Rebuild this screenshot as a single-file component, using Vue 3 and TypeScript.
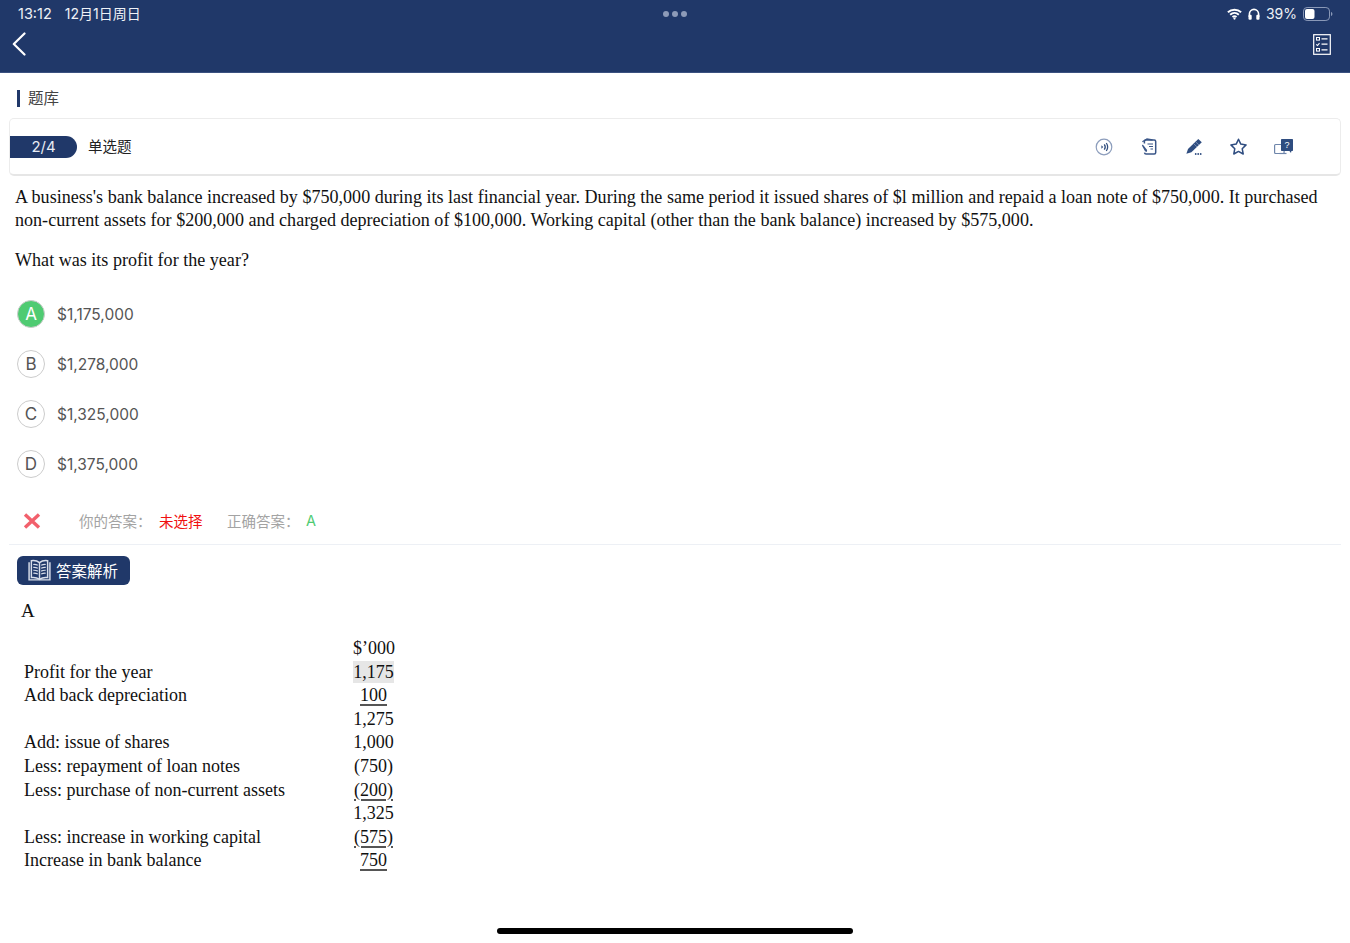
<script setup lang="ts">
interface Opt { key: string; text: string; correct?: boolean }
const options: Opt[] = [
  { key: 'A', text: '$1,175,000', correct: true },
  { key: 'B', text: '$1,278,000' },
  { key: 'C', text: '$1,325,000' },
  { key: 'D', text: '$1,375,000' },
]
interface Row { label: string; value: string; under?: boolean; mark?: boolean }
const rows: Row[] = [
  { label: '', value: '$’000' },
  { label: 'Profit for the year', value: '1,175', mark: true },
  { label: 'Add back depreciation', value: '100', under: true },
  { label: '', value: '1,275' },
  { label: 'Add: issue of shares', value: '1,000' },
  { label: 'Less: repayment of loan notes', value: '(750)' },
  { label: 'Less: purchase of non-current assets', value: '(200)', under: true },
  { label: '', value: '1,325' },
  { label: 'Less: increase in working capital', value: '(575)', under: true },
  { label: 'Increase in bank balance', value: '750', under: true },
]
</script>

<template>
  <div class="page">
    <header class="top">
      <div class="status">
        <div class="status-left"><span class="time">13:12</span><span>12月1日周日</span></div>
        <div class="dots"><i></i><i></i><i></i></div>
        <div class="status-right">
          <svg width="15" height="12" viewBox="0 0 17 13" fill="none" stroke="#fff" stroke-width="2.200">
            <path d="M1 4.600C5.300.6 11.700.6 16 4.600" />
            <path d="M3.600 7.400c2.900-2.600 6.900-2.600 9.800 0" />
            <path d="M6.200 10c1.400-1.100 3.200-1.100 4.600 0" />
            <circle cx="8.500" cy="11.700" r="1.300" fill="#fff" stroke="none" />
          </svg>
          <svg class="phones" width="12" height="12" viewBox="0 0 12 12" fill="none">
            <path d="M1.400 9V6a4.600 4.600 0 0 1 9.200 0v3" stroke="#fff" stroke-width="1.600" />
            <rect x="0.500" y="6.800" width="3.200" height="5" rx="1.100" fill="#fff" />
            <rect x="8.300" y="6.800" width="3.200" height="5" rx="1.100" fill="#fff" />
          </svg>
          <span class="pct">39%</span>
          <svg width="30" height="14" viewBox="0 0 30 14" fill="none">
            <rect x="0.500" y="0.500" width="26" height="13" rx="3.600" stroke="#8a99b8" />
            <rect x="2" y="2" width="9.500" height="10" rx="2" fill="#fff" />
            <path d="M28 5v4c.9-.3 1.400-1 1.400-2S28.900 5.300 28 5z" fill="#8a99b8" />
          </svg>
        </div>
      </div>
      <div class="nav">
        <svg width="14" height="24" viewBox="0 0 14 24" fill="none" stroke="#fff" stroke-width="2.200" stroke-linecap="round" stroke-linejoin="round">
          <path d="M12.500 1.500 1.800 12l10.700 10.500" />
        </svg>
        <svg width="18" height="21" viewBox="0 0 18 21" fill="none" stroke="#fff">
          <rect x="0.700" y="0.700" width="16.600" height="19.600" stroke-width="1.200" />
          <rect x="3.500" y="3.500" width="3" height="2.600" stroke-width="1" />
          <path d="M8.500 4.800h6M8.500 10.200h6M8.500 15.800h6" stroke-width="1.200" />
          <path d="m3.300 10.300 1.200 1.200 2-2.300" stroke-width="1.100" />
          <rect x="3.500" y="14.500" width="3" height="2.600" stroke-width="1" />
        </svg>
      </div>
    </header>

    <div class="crumb"><span>题库</span></div>

    <div class="card">
      <div class="card-left">
        <div class="pill">2/4</div>
        <div class="type">单选题</div>
      </div>
      <div class="tools">
        <svg width="18" height="18" viewBox="0 0 18 18" fill="none" stroke="#33507f">
          <circle cx="9" cy="9" r="7.800" stroke="#8c9dbc" stroke-width="1.200" />
          <path d="M6.400 7.200 8.200 9l-1.800 1.800z" fill="#33507f" stroke="none" />
          <path d="M9.300 6.300c1.200 1.700 1.200 3.700 0 5.400" stroke-width="1.300" />
          <path d="M11.300 5c1.700 2.500 1.700 5.500 0 8" stroke-width="1.300" />
        </svg>
        <svg width="16" height="17" viewBox="0 0 16 17" fill="none" stroke="#3a5688" stroke-width="1.500">
          <path d="M3.400 5.500V3.600c0-.9.600-1.500 1.500-1.500h8.300c.9 0 1.500.6 1.500 1.500v10.800c0 .9-.6 1.500-1.500 1.500H5c-.8 0-1.400-.5-1.500-1.200" />
          <path d="M1.400 3.800 6 1l5.600 1" stroke-width="1.300" />
          <path d="M6.500 6h5.500M8 8.500h4M9.500 11h2.500" stroke-width="1.200" />
          <path d="m1.800 6.400 4.300 5.700-.3 2-1.800-.9L.9 7.600z" fill="#3a5688" stroke="none" />
        </svg>
        <svg class="pencil" width="16" height="16" viewBox="0 0 16 16" fill="#2f4d80">
          <path d="M12.300 0 15.800 3.300 5.400 13.200.4 14.800 2 9.900z" />
          <path d="m9.600 2.800 3.400 3.200M7.700 4.700l3.300 3.200" stroke="#8fa3c4" stroke-width=".7" fill="none" />
          <circle cx="9.700" cy="15" r=".9" />
          <circle cx="12.200" cy="15" r=".9" />
          <circle cx="14.700" cy="15" r=".9" />
        </svg>
        <svg width="17" height="17" viewBox="0 0 17 17" fill="none" stroke="#2f4d80" stroke-width="1.500" stroke-linejoin="round">
          <path d="m8.500 1.200 2.300 4.900 5.300.8-3.900 3.800 1 5.300-4.700-2.600L3.800 16l1-5.300L.9 6.900l5.300-.8z" />
        </svg>
        <svg width="20" height="16" viewBox="0 0 20 16" fill="none">
          <rect x="0.600" y="5.500" width="9.500" height="9" rx="1" stroke="#6f86ab" stroke-width="1.200" />
          <path d="M5.500 14.500h7" stroke="#6f86ab" stroke-width="1.200" />
          <path d="M7 .700c0-.4.300-.7.700-.7H18.300c.4 0 .7.300.7.700v10.600c0 .4-.3.700-.7.700h-.9l-.4 2-1.600-2H7.700c-.4 0-.7-.3-.7-.7z" fill="#2f4d80" />
          <text x="13" y="9" class="qmark">?</text>
        </svg>
      </div>
    </div>

    <section class="question">
      <p class="para">A business's bank balance increased by $750,000 during its last financial year. During the same period it issued shares of $l million and repaid a loan note of $750,000. It purchased non-current assets for $200,000 and charged depreciation of $100,000. Working capital (other than the bank balance) increased by $575,000.</p>
      <p class="ask">What was its profit for the year?</p>
    </section>

    <ul class="options">
      <li v-for="o in options" :key="o.key" class="option">
        <span class="badge" :class="{ ok: o.correct }">{{ o.key }}</span>
        <span>{{ o.text }}</span>
      </li>
    </ul>

    <div class="result">
      <svg class="cross" width="18" height="16" viewBox="0 0 18 16" fill="none" stroke="#f2606c" stroke-width="3.400">
        <path d="m2 1.500 14 13M16 1.500l-14 13" />
      </svg>
      <span class="muted first">你的答案：</span>
      <span class="red">未选择</span>
      <span class="muted second">正确答案：</span>
      <span class="green">A</span>
    </div>

    <div class="analysis-head">
      <div class="analysis-tag">
        <svg width="25" height="25" viewBox="0 0 24 24" fill="none" stroke="#d8deea" stroke-width="1">
          <path d="M2 4v17h20V4" stroke-width="1.400" />
          <path d="M12 4.500C9.800 2.700 7 2.200 4.200 2.600V18.800c2.800-.4 5.600.1 7.800 1.700 2.200-1.600 5-2.100 7.800-1.700V2.600C17 2.200 14.200 2.700 12 4.500zM12 4.500v16" stroke-width="1.400" />
          <path d="M6 6.200c1.400-.1 3 .1 4.400.8M6 9c1.400-.1 3 .1 4.400.8M6 11.800c1.400-.1 3 .1 4.400.8M6 14.600c1.400-.1 3 .1 4.400.8M18 6.200c-1.400-.1-3 .1-4.400.8M18 9c-1.400-.1-3 .1-4.400.8M18 11.800c-1.400-.1-3 .1-4.400.8M18 14.600c-1.400-.1-3 .1-4.400.8" stroke-width="1.100" />
        </svg>
        <span>答案解析</span>
      </div>
    </div>

    <div class="answer-letter">A</div>

    <div class="sheet">
      <template v-for="(r, i) in rows" :key="i">
        <div class="sheet-label">{{ r.label }}</div>
        <div class="sheet-value"><span :class="{ under: r.under, mark: r.mark }">{{ r.value }}</span></div>
      </template>
    </div>

    <div class="home"></div>
  </div>
</template>

<style>
html, body { margin: 0; background: #fff; }
</style>

<style scoped>
.page {
  height: 943px;
  display: flex;
  flex-direction: column;
  overflow: hidden;
  background: #fff;
  font-family: Inter, "Noto Sans CJK SC", sans-serif;
}
.top {
  height: 73px;
  flex: none;
  background: #203869;
  color: #fff;
  padding: 5px 18px 0;
  box-sizing: border-box;
  border-bottom: 1px solid #3b5180;
}
.status {
  display: grid;
  grid-template-columns: 1fr auto 1fr;
  align-items: center;
  height: 18px;
  font-size: 14px;
  line-height: 18px;
  color: #eef1f6;
}
.status-left { display: flex; gap: 13px; align-items: baseline; }
.time { font-size: 14.500px; }
.dots { display: flex; gap: 3px; }
.dots i { width: 6px; height: 6px; border-radius: 50%; background: #8d9bb8; }
.status-right { display: flex; justify-content: flex-end; align-items: center; margin-right: -1px; }
.phones { margin-left: 6px; }
.pct { margin: 0 6px; font-size: 14px; }
.nav {
  display: flex;
  justify-content: space-between;
  align-items: center;
  margin: 9px 1px 0 -6px;
  height: 24px;
}
.crumb {
  margin: 17px 0 0 17px;
  padding-left: 8px;
  border-left: 3px solid #203869;
  height: 17px;
  line-height: 17px;
  font-size: 15.500px;
  color: #444;
}
.card {
  margin: 11px 9px 0;
  height: 58px;
  flex: none;
  box-sizing: border-box;
  border: 1px solid #ececec;
  border-bottom: 2px solid #e6e6e6;
  border-radius: 5px;
  display: flex;
  align-items: center;
  justify-content: space-between;
}
.card-left { display: flex; align-items: center; }
.pill {
  width: 67px;
  height: 22px;
  line-height: 22px;
  text-align: center;
  background: #203869;
  color: #e8ecf3;
  font-size: 15px;
  border-radius: 0 11px 11px 0;
}
.type { margin-left: 11px; padding-bottom: 2px; font-size: 14.500px; color: #222; }
.tools {
  display: flex;
  align-items: center;
  justify-content: space-between;
  width: 199px;
  margin-right: 46px;
}
.pencil { margin-left: 2px; }
.qmark { fill: #fff; font-size: 9px; text-anchor: middle; font-family: "Liberation Sans", sans-serif; }
.question {
  margin: 0;
  padding: 10px 15px 0;
  font-family: "Liberation Serif", serif;
  font-size: 18.080px;
  line-height: 23px;
  color: #111;
}
.para { margin: 0; }
.ask { margin: 17px 0 0; }
.options {
  list-style: none;
  margin: 17px 0 0;
  padding: 0 0 0 17px;
}
.option {
  height: 50px;
  display: flex;
  align-items: center;
  gap: 12px;
  font-size: 15.500px;
  color: #555;
}
.badge {
  width: 28px;
  height: 28px;
  box-sizing: border-box;
  border: 1px solid #ccc;
  border-radius: 50%;
  display: flex;
  align-items: center;
  justify-content: center;
  font-size: 17px;
  color: #555;
}
.badge.ok { background: #4fcb72; color: #fff; }
.result {
  margin: 10px 9px 0;
  padding: 0 0 2px 14px;
  height: 46px;
  flex: none;
  box-sizing: border-box;
  border-bottom: 1px solid #edf0f5;
  display: flex;
  align-items: center;
  font-size: 14.500px;
}
.muted { color: #a3a3a3; }
.first { margin-left: 38px; }
.red { margin-left: 7.500px; color: #f01010; }
.second { margin-left: 24.500px; }
.green { margin-left: 6.500px; color: #4fcb72; }
.analysis-head { padding: 11px 0 0 17px; }
.analysis-tag {
  width: 113px;
  height: 29px;
  box-sizing: border-box;
  padding: 0 0 1px 10px;
  background: #203869;
  border-radius: 6px;
  color: #fff;
  display: flex;
  align-items: center;
  gap: 4px;
  font-size: 15.500px;
}
.answer-letter {
  margin: 15px 0 0 21px;
  font-family: "Liberation Serif", serif;
  font-size: 19px;
  line-height: 22px;
  color: #111;
}
.sheet {
  margin: 15px 0 0 24px;
  display: grid;
  grid-template-columns: 329px 41px;
  grid-auto-rows: 23.600px;
  font-family: "Liberation Serif", serif;
  font-size: 18px;
  line-height: 22px;
  color: #111;
}
.sheet-value { text-align: center; white-space: nowrap; }
.under { text-decoration: underline; text-decoration-color: #555; text-decoration-thickness: 1.500px; text-underline-offset: 3px; }
.mark { background: #e6e6e6; padding: 1px 0; }
.home {
  margin: auto auto 9px;
  width: 356px;
  height: 6px;
  border-radius: 3px;
  background: #000;
}
</style>
